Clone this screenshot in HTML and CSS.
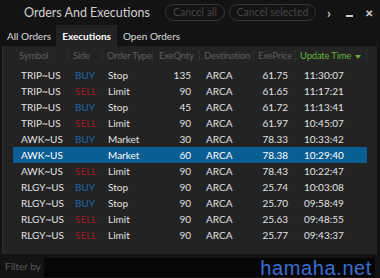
FILE: index.html
```html
<!DOCTYPE html>
<html lang="en">
<head>
    <meta charset="UTF-8">
    <title>Orders And Executions</title>
    <link rel="stylesheet" href="styles.css">
</head>
<body>
    <div class="window">
        <div class="titlebar">
            <h1>Orders And Executions</h1>
            <button class="pill">Cancel all</button>
            <button class="pill wide">Cancel selected</button>
            <span class="win-btn">&#x203A;</span>
            <span class="win-btn min"></span>
            <span class="win-btn close">&#x2715;</span>
        </div>
        <div class="tabs">
            <span class="tab">All Orders</span>
            <span class="tab active">Executions</span>
            <span class="tab">Open Orders</span>
        </div>
        <div class="panel">
            <div class="grid head">
                <span>Symbol</span>
                <span>Side</span>
                <span>Order Type</span>
                <span>ExeQnty</span>
                <span>Destination</span>
                <span>ExePrice</span>
                <span class="sorted">Update Time <i class="caret"></i></span>
            </div>
            <div id="rows"></div>
        </div>
        <div class="filter">
            <label for="filter">Filter by</label>
            <input id="filter" type="text">
        </div>
        <div class="watermark">hamaha.net</div>
    </div>

    <script>
        const executions = [
            ['TRIP~US', 'BUY', 'Stop', 135, 'ARCA', '61.75', '11:30:07'],
            ['TRIP~US', 'SELL', 'Limit', 90, 'ARCA', '61.65', '11:17:21'],
            ['TRIP~US', 'BUY', 'Stop', 45, 'ARCA', '61.72', '11:13:41'],
            ['TRIP~US', 'SELL', 'Limit', 90, 'ARCA', '61.97', '10:45:07'],
            ['AWK~US', 'BUY', 'Market', 30, 'ARCA', '78.33', '10:33:42'],
            ['AWK~US', 'BUY', 'Market', 60, 'ARCA', '78.38', '10:29:40'],
            ['AWK~US', 'SELL', 'Limit', 90, 'ARCA', '78.43', '10:22:47'],
            ['RLGY~US', 'BUY', 'Stop', 90, 'ARCA', '25.74', '10:03:08'],
            ['RLGY~US', 'BUY', 'Stop', 90, 'ARCA', '25.70', '09:58:49'],
            ['RLGY~US', 'SELL', 'Limit', 90, 'ARCA', '25.63', '09:48:55'],
            ['RLGY~US', 'SELL', 'Limit', 90, 'ARCA', '25.77', '09:43:37']
        ];
        const selectedIndex = 5;
        const rowsElement = document.getElementById('rows');

        executions.forEach((exec, index) => {
            const row = document.createElement('div');
            row.className = 'grid row' + (index === selectedIndex ? ' selected' : '');
            exec.forEach((value, col) => {
                const cell = document.createElement('span');
                cell.textContent = value;
                if (col === 1) cell.className = value === 'BUY' ? 'buy' : 'sell';
                row.appendChild(cell);
            });
            rowsElement.appendChild(row);
        });
    </script>
</body>
</html>
```

FILE: styles.css
```css
body {
    margin: 0;
    background-color: #131313;
    font-family: Lato, "Noto Sans", sans-serif;
    color: #e6e6e6;
}
.window {
    position: relative;
    width: 380px;
    height: 278px;
    display: flex;
    flex-direction: column;
    overflow: hidden;
    white-space: nowrap;
}
.titlebar {
    height: 25px;
    flex-shrink: 0;
    display: flex;
    align-items: center;
    padding-left: 24px;
}
.titlebar h1 {
    flex: 0 0 141px;
    margin: 0;
    font-size: 12.5px;
    font-weight: 400;
    color: #d0d0d0;
}
.pill {
    flex: 0 0 60px;
    height: 17px;
    margin-right: 4px;
    padding: 0;
    border: 1.5px solid #363636;
    border-radius: 9px;
    background: transparent;
    color: #464646;
    font-family: inherit;
    font-size: 10.5px;
    line-height: 13px;
    text-align: center;
}
.pill.wide {
    flex-basis: 87px;
    margin-right: 0;
}
.win-btn {
    flex-shrink: 0;
    width: 20px;
    text-align: center;
    color: #cfcfcf;
    font-size: 13px;
    font-weight: 700;
}
.pill.wide + .win-btn {
    margin-left: 3px;
}
.win-btn.min {
    height: 2px;
    width: 7px;
    margin: 6px 6px 0 7px;
    background: #cfcfcf;
}
.win-btn.close {
    font-size: 10px;
}
.tabs {
    height: 21px;
    flex-shrink: 0;
    display: flex;
    align-items: stretch;
    padding-left: 2px;
    font-size: 10px;
}
.tab {
    padding: 0 5px;
    display: flex;
    align-items: center;
    color: #dcdcdc;
}
.tab.active {
    background-color: #232323;
    color: #fff;
    font-weight: 700;
    margin: 0 1px 0 0;
    padding: 0 6px;
}
.panel {
    flex: 1;
    margin: 0 3px 0 2px;
    padding: 0 10px;
    background-color: #232323;
    border-left: 1px solid #2e2e2e;
}
.grid {
    display: grid;
    grid-template-columns: 56px 34px 50px 47px 54px 42px 71px;
    font-size: 10px;
}
.head {
    height: 19px;
    align-items: center;
    color: #5f5f5f;
    margin-bottom: 2px;
    font-size: 9.5px;
    letter-spacing: -0.2px;
}
.head span {
    padding-left: 4px;
    border-right: 1px dotted #3a3a3a;
    line-height: 11px;
}
.head span:first-child {
    padding-left: 6px;
}
.head span:nth-child(4) {
    padding-left: 6px;
}
.head .sorted {
    color: #6aae36;
    padding-left: 4px;
}
.caret {
    display: inline-block;
    margin-left: 2px;
    vertical-align: middle;
    border-left: 3px solid transparent;
    border-right: 3px solid transparent;
    border-top: 4px solid #6aae36;
}
.row {
    height: 16px;
    align-items: center;
    color: #e2e2e2;
}
.row span:nth-child(1) { padding-left: 8px; }
.row span:nth-child(2) { padding-left: 6px; }
.row span:nth-child(3) { padding-left: 5px; }
.row span:nth-child(4) { text-align: right; padding-right: 9px; }
.row span:nth-child(5) { padding-left: 6px; }
.row span:nth-child(6) { text-align: right; padding-right: 8px; }
.row span:nth-child(7) { padding-left: 8px; }
.buy { color: #1c6aa3; }
.sell { color: #9b1b29; }
.row.selected {
    background-color: #0a5e93;
    color: #fff;
}
.row.selected .buy {
    color: #0a5e93;
}
.filter {
    height: 24px;
    flex-shrink: 0;
    display: flex;
    align-items: center;
    padding-left: 5px;
    font-size: 10px;
    color: #5a5a5a;
}
.filter label {
    width: 39px;
}
.filter input {
    flex: 1;
    height: 19px;
    margin: 3px 5px 0 0;
    padding: 0;
    border: none;
    background-color: #060606;
}
.watermark {
    position: absolute;
    right: 8px;
    bottom: 0;
    font-family: "Liberation Sans", Arial, sans-serif;
    font-size: 20px;
    line-height: 20px;
    color: #3c6fd1;
    letter-spacing: 0.6px;
}
```
